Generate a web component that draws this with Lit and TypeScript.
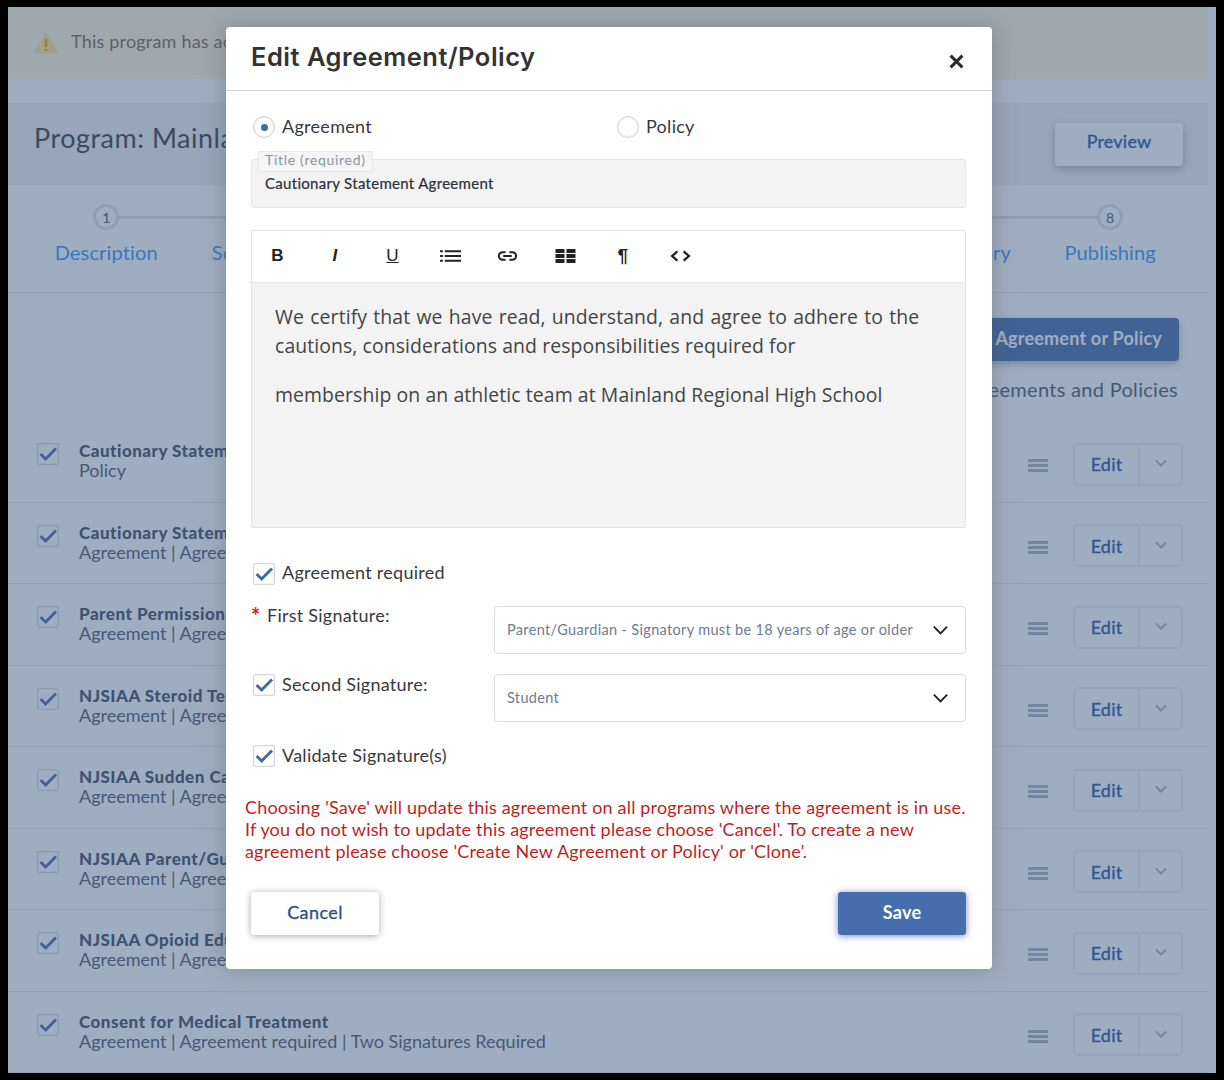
import { LitElement, html, css, svg } from "lit";
import { customElement } from "lit/decorators.js";

const rows = [
  ["Cautionary Statement", "Policy"],
  ["Cautionary Statement Agreement", "Agreement | Agreement required | Two Signatures Required"],
  ["Parent Permission", "Agreement | Agreement required | Two Signatures Required"],
  ["NJSIAA Steroid Testing", "Agreement | Agreement required | Two Signatures Required"],
  ["NJSIAA Sudden Cardiac Death", "Agreement | Agreement required | Two Signatures Required"],
  ["NJSIAA Parent/Guardian", "Agreement | Agreement required | Two Signatures Required"],
  ["NJSIAA Opioid Education", "Agreement | Agreement required | Two Signatures Required"],
  ["Consent for Medical Treatment", "Agreement | Agreement required | Two Signatures Required"],
];
const steps = ["Description", "Sessions", "Registration", "Fees", "Forms", "Waivers", "Discovery", "Publishing"];

const check = svg`<svg class="tick" viewBox="0 0 20 20"><path d="M2.6 10l5 5L18 4.4" fill="none" stroke="#4169a9" stroke-width="2.9"/></svg>`;
const chev = svg`<svg class="chev" viewBox="0 0 18 10"><path d="M2 1.5l7 7 7-7" fill="none" stroke="#1f2326" stroke-width="2"/></svg>`;
const tools = [
  html`<span class="t b">B</span>`,
  html`<span class="t i">I</span>`,
  html`<span class="t u">U</span>`,
  svg`<svg class="ti" viewBox="0 0 22 14"><path d="M0 2h3M5 2h17M0 7h3M5 7h17M0 12h3M5 12h17" stroke="#222" stroke-width="2.2"/></svg>`,
  svg`<svg class="ti" viewBox="0 0 22 14"><path d="M9 3H6a4 4 0 0 0 0 8h3M13 3h3a4 4 0 0 1 0 8h-3M6.5 7h9" fill="none" stroke="#222" stroke-width="2.2"/></svg>`,
  svg`<svg class="ti" viewBox="0 0 20 14"><path d="M0 0h9v4H0zM11 0h9v4h-9zM0 5h9v4H0zM11 5h9v4h-9zM0 10h9v4H0zM11 10h9v4h-9z" fill="#222"/></svg>`,
  html`<span class="t p">¶</span>`,
  svg`<svg class="ti" viewBox="0 0 20 12"><path d="M7 1.5L2 6l5 4.5M13 1.5L18 6l-5 4.5" fill="none" stroke="#222" stroke-width="2.2"/></svg>`,
];

@customElement("app-root")
export class AppRoot extends LitElement {
  static styles = css`
    :host { display: block; width: 1224px; height: 1080px; background: #000; padding: 7px 8px; box-sizing: border-box;
      font-family: "Lato", "Liberation Sans", sans-serif; color: #373a3c; }
    .page { position: relative; width: 1208px; height: 1066px; padding-right: 8px; box-sizing: border-box; background: #fff; overflow: hidden; }
    .alert { height: 72px; background: #fdf5d8; display: flex; align-items: center; padding-left: 25px; gap: 12px; font-size: 18px; color: #6f6a4c; box-sizing: border-box; letter-spacing: .2px; }
    .alert svg { width: 26px; height: 22px; }
    .alert span { position: relative; top: -2px; }
    .band { margin-top: 24px; height: 82px; background: #f1f1f1; display: flex; align-items: center; justify-content: space-between; padding: 0 25px 0 26px; }
    .band h1 { font-size: 27px; font-weight: 400; margin: 0; position: relative; top: -7px; letter-spacing: .5px; }
    .preview { width: 128px; height: 43px; background: #fff; border-radius: 4px; box-shadow: 0 3px 8px rgba(0,0,0,.3); display: flex; align-items: center; justify-content: center; padding-bottom: 6px; box-sizing: border-box; font-size: 18px; -webkit-text-stroke: .35px currentColor; letter-spacing: .2px; color: #234fa5; }
    .steps { height: 108px; box-sizing: border-box; border-bottom: 1px solid #e2e5ea; position: relative; display: grid; grid-template-columns: repeat(8, 143.43px); padding-left: 26.5px; }
    .rail { position: absolute; left: 98px; right: 98px; top: 31px; height: 3px; background: #dde0e6; }
    .step { position: relative; display: flex; flex-direction: column; align-items: center; padding-top: 19px; }
    .dot { width: 20px; height: 20px; border: 3px solid #dde0e6; border-radius: 50%; background: #fff; display: flex; align-items: center; justify-content: center; font-size: 14px; color: #4a5566; }
    .lab { margin-top: 10px; font-size: 20px; color: #3591f9; white-space: nowrap; letter-spacing: .15px; }
    .actions { height: 128px; display: flex; flex-direction: column; align-items: flex-end; padding: 25px 29px 0 0; box-sizing: border-box; }
    .create { height: 43px; width: 320px; padding: 0 17px 3px 0; box-sizing: border-box; background: #4169a9; border-radius: 4px; color: #fff; font-size: 18px; font-weight: 700; letter-spacing: .2px; display: flex; align-items: center; justify-content: flex-end; box-shadow: 0 3px 8px rgba(0,0,0,.3); }
    .sub { margin-top: 16px; margin-right: 1px; font-size: 20px; letter-spacing: .3px; color: #4a5566; }
    .row { height: 81.5px; box-sizing: border-box; border-bottom: 1px solid #e6e9ed; display: flex; align-items: center; padding: 0 25px 0 28.5px; gap: 20.5px; }
    .row:last-child { border-bottom: 0; }
    .row .cb { margin-top: -14px; }
    .rt { flex: 1; display: flex; flex-direction: column; }
    .rt b { font-size: 17px; font-weight: 900; line-height: 19px; letter-spacing: .5px; color: #3b4a5c; }
    .rt span { font-size: 18px; line-height: 21px; color: #4a5566; }
    .ham { width: 20px; height: 13px; margin: 9px 5px 0 0; border-top: 3px solid #a8aeba; border-bottom: 3px solid #a8aeba; position: relative; box-sizing: border-box; }
    .ham::after { content: ""; position: absolute; left: 0; right: 0; top: 2px; height: 3px; background: #a8aeba; }
    .split { width: 110px; height: 43px; box-sizing: border-box; margin-top: 6px; border: 2px solid #eceef2; border-radius: 5px; display: grid; grid-template-columns: 65px 1fr; }
    .split .e { display: flex; align-items: center; justify-content: center; font-size: 18px; -webkit-text-stroke: .35px currentColor; letter-spacing: .2px; color: #234fa5; border-right: 2px solid #eceef2; }
    .split .d { display: flex; align-items: center; justify-content: center; padding-bottom: 2px; }
    .split svg { width: 12px; height: 8px; }
    .cb { width: 22px; height: 22px; flex: none; box-sizing: border-box; border: 1px solid #d5d8dd; border-radius: 2px; background: #fff; display: block; box-shadow: inset 0 0 0 1px #f3f4f6; }
    .tick { display: block; width: 20px; height: 20px; }
    .overlay { position: absolute; inset: 0; background: rgba(63, 91, 129, .5); }
    .modal { position: absolute; left: 218px; top: 20px; width: 766px; height: 942px; background: #fff; border-radius: 4px; box-shadow: 0 0 24px rgba(70,80,80,.35); box-sizing: border-box; display: flex; flex-direction: column; }
    .mh { height: 64px; flex: none; box-sizing: border-box; border-bottom: 1px solid #d8d8d8; display: flex; justify-content: space-between; padding: 13px 28px 0 25px; }
    .mh h2 { margin: 0; font-family: "Inter", "Lato", sans-serif; font-size: 25.5px; letter-spacing: .5px; font-weight: 600; line-height: 33px; color: #333; }
    .x { width: 15px; height: 15px; margin-top: 14px; }
    .mb { padding: 0 26px 0 25px; display: flex; flex-direction: column; flex: 1; position: relative; }
    .radios { display: grid; grid-template-columns: 364px 1fr; margin-top: 25px; height: 22px; padding-left: 2px; }
    .rad { display: flex; align-items: flex-start; line-height: 20px; gap: 7px; font-size: 18px; letter-spacing: .28px; }
    .circ { width: 22px; height: 22px; box-sizing: border-box; border-radius: 50%; border: 1px solid #cfd2d6; display: flex; align-items: center; justify-content: center; box-shadow: inset 0 0 0 1px #f2f2f2; }
    .circ i { width: 7px; height: 7px; border-radius: 50%; background: #4169a9; }
    .title { margin-top: 21px; height: 49px; box-sizing: border-box; background: #f3f3f3; border: 1px solid #e4e6ea; border-radius: 3px; position: relative; padding: 14px 13px 0; font-size: 15px; -webkit-text-stroke: .2px currentColor; color: #2c3036; line-height: 18px; letter-spacing: .3px; }
    .legend { position: absolute; left: 6px; top: -9px; height: 21px; padding: 0 6px; box-sizing: border-box; background: #f5f5f6; border: 1px solid #e5e7ec; font-size: 14px; line-height: 15px; letter-spacing: .7px; color: #8a93a3; -webkit-text-stroke: 0; }
    .editor { margin-top: 22px; height: 298px; box-sizing: border-box; border: 1px solid #e2e3e6; border-radius: 2px; display: flex; flex-direction: column; }
    .tb { height: 52px; flex: none; box-sizing: border-box; padding-bottom: 1px; display: grid; grid-template-columns: repeat(8, 57.6px); align-items: center; justify-items: center; margin-left: -3.5px; border-bottom: 1px solid #e6e8ee; }
    .t { font-size: 17px; color: #222; font-family: "Liberation Sans", sans-serif; line-height: 20px; }
    .t.b { font-weight: 700; }
    .t.i { font-style: italic; font-weight: 700; }
    .t.u { text-decoration: underline; }
    .t.p { font-weight: 700; font-size: 19px; }
    .ti { width: 21px; height: 14px; }
    .ec { flex: 1; background: #f3f3f3; padding: 19px 23px; font-family: "Open Sans", sans-serif; font-size: 19.4px; line-height: 29px; color: #444; letter-spacing: .1px; }
    .ec p { margin: 0 0 20px; }
    .w1 { word-spacing: 1.1px; }
    .ck { display: flex; align-items: flex-start; line-height: 20px; gap: 7px; font-size: 18px; letter-spacing: .28px; padding-left: 2px; margin-top: 35px; height: 22px; }
    .ck.req { line-height: 18px; }
    .ck.val { margin-top: 23px; }
    .sig { display: grid; grid-template-columns: 243px 1fr; }
    .sig .l { display: flex; align-items: flex-start; line-height: 20px; gap: 7px; font-size: 18px; letter-spacing: .25px; height: 22px; padding-left: 2px; }
    .sig .l .st { color: #d02020; margin-left: -2px; font-size: 22px; font-weight: 700; line-height: 22px; width: 9px; }
    .sig.a { margin-top: 21px; }
    .sig.a .l { margin-top: -1px; }
    .sig.b { margin-top: 20px; }
    .sel { height: 48px; box-sizing: border-box; border: 1px solid #d8dadd; border-radius: 4px; display: flex; align-items: center; justify-content: space-between; padding: 0 16px 2px 12px; font-size: 14.5px; color: #6f7c8c; letter-spacing: .33px; }
    .chev { width: 17px; height: 10px; margin-top: 2px; }
    .warn { margin: 29px 0 0 -6px; font-size: 18px; line-height: 22px; color: #c01f1f; white-space: nowrap; letter-spacing: .17px; }
    .btns { margin-top: 30px; display: flex; justify-content: space-between; }
    .btn { width: 128px; height: 43px; box-sizing: border-box; padding-bottom: 3px; border-radius: 3px; display: flex; align-items: center; justify-content: center; font-size: 18px; }
    .cancel { background: #fff; color: #2f4f80; -webkit-text-stroke: .3px currentColor; letter-spacing: .4px; box-shadow: 0 1px 7px rgba(0,0,0,.35); }
    .save { background: #466dad; color: #fff; font-weight: 700; letter-spacing: .3px; box-shadow: 0 1px 7px rgba(40,50,160,.6); }
  `;

  private cb() { return html`<span class="cb">${check}</span>`; }

  render() {
    return html`<div class="page">
      <div class="alert">
        <svg viewBox="0 0 26 22"><path d="M13 1L25 21H1z" fill="#ffe58a" stroke="#f5e7a0"/><path d="M13 7v8M13 17v2" stroke="#e0a000" stroke-width="2.4"/></svg>
        <span>This program has active registrations.</span>
      </div>
      <div class="band"><h1>Program: Mainland Regional High School</h1><div class="preview">Preview</div></div>
      <div class="steps"><div class="rail"></div>
        ${steps.map((s, i) => html`<div class="step"><div class="dot">${i + 1}</div><div class="lab">${s}</div></div>`)}
      </div>
      <div class="actions"><div class="create">Create New Agreement or Policy</div><div class="sub">Agreements and Policies</div></div>
      ${rows.map((r) => html`<div class="row">${this.cb()}
        <div class="rt"><b>${r[0]}</b><span>${r[1]}</span></div>
        <div class="ham"></div>
        <div class="split"><div class="e">Edit</div><div class="d"><svg viewBox="0 0 12 8"><path d="M1 1.5l5 5 5-5" fill="none" stroke="#a8aeba" stroke-width="2"/></svg></div></div>
      </div>`)}
      <div class="overlay"></div>
      <div class="modal">
        <div class="mh"><h2>Edit Agreement/Policy</h2>
          <svg class="x" viewBox="0 0 14 14"><path d="M1.5 1.5l11 11M12.5 1.5l-11 11" stroke="#2a2a2a" stroke-width="2.8"/></svg></div>
        <div class="mb">
          <div class="radios">
            <div class="rad"><span class="circ"><i></i></span>Agreement</div>
            <div class="rad"><span class="circ"></span>Policy</div>
          </div>
          <div class="title"><span class="legend">Title (required)</span>Cautionary Statement Agreement</div>
          <div class="editor">
            <div class="tb">${tools}</div>
            <div class="ec"><p><span class="w1">We certify that we have read, understand, and agree to adhere to the</span><br>cautions, considerations and responsibilities required for</p>
              <p>membership on an athletic team at Mainland Regional High School</p></div>
          </div>
          <div class="ck req">${this.cb()}Agreement required</div>
          <div class="sig a"><div class="l"><span class="st">*</span>First Signature:</div>
            <div class="sel">Parent/Guardian - Signatory must be 18 years of age or older${chev}</div></div>
          <div class="sig b"><div class="l">${this.cb()}Second Signature:</div>
            <div class="sel">Student${chev}</div></div>
          <div class="ck val">${this.cb()}Validate Signature(s)</div>
          <div class="warn">Choosing 'Save' will update this agreement on all programs where the agreement is in use.<br>If you do not wish to update this agreement please choose 'Cancel'. To create a new<br>agreement please choose 'Create New Agreement or Policy' or 'Clone'.</div>
          <div class="btns"><div class="btn cancel">Cancel</div><div class="btn save">Save</div></div>
        </div>
      </div>
    </div>`;
  }
}
